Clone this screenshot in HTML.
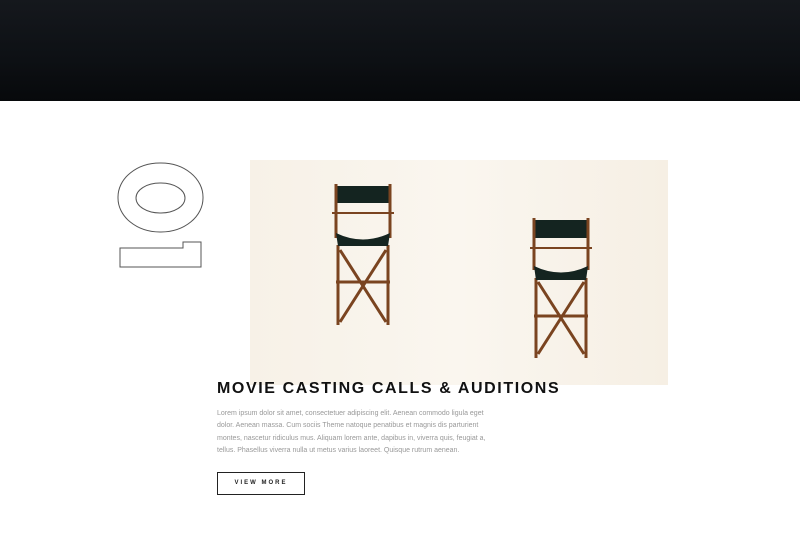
<!DOCTYPE html>
<html><head><style>
body{margin:0;width:800px;height:550px;background:#fff;position:relative;overflow:hidden;font-family:"Liberation Sans",sans-serif}
.top{position:absolute;left:0;top:0;width:800px;height:101px;background:linear-gradient(180deg,#15181d 0%,#0d1014 60%,#07090b 100%)}
.num{position:absolute;left:0;top:0}
.img{position:absolute;left:250px;top:160px;width:418px;height:225px;background:linear-gradient(90deg,#f7f1e7,#faf6ef 50%,#f6efe4)}
h1{position:absolute;left:217px;top:380px;margin:0;font-size:16px;letter-spacing:1.6px;font-weight:bold;color:#111;white-space:nowrap}
p{position:absolute;left:217px;top:408px;margin:0;width:270px;font-size:7px;line-height:12.3px;color:#999}
.btn{position:absolute;left:217px;top:472px;width:86px;height:21px;border:1.5px solid #222;font-size:6px;letter-spacing:2px;font-weight:bold;text-align:center;line-height:21px;color:#222}
</style></head><body>
<div class="top"></div>
<svg class="num" width="800" height="300" viewBox="0 0 800 300">
<g fill="none" stroke="#555" stroke-width="1">
<rect x="118" y="163" width="85" height="69" rx="42" ry="34"/>
<rect x="136" y="183" width="49" height="30" rx="24" ry="15"/>
<path d="M120 267 L201 267 L201 242 L183 242 L183 248 L120 248 Z"/>
</g></svg>
<div class="img">
<svg width="418" height="225" viewBox="0 0 418 225">
<g stroke="#7a4420" stroke-width="3" fill="none">
<rect x="86" y="26" width="54" height="17" fill="#142420" stroke="none"/>
<line x1="86" y1="24" x2="86" y2="78"/><line x1="140" y1="24" x2="140" y2="78"/>
<line x1="82" y1="53" x2="144" y2="53" stroke-width="2"/>
<path d="M88 85 L88 165 M138 85 L138 165 M90 90 L136 162 M136 90 L90 162 M86 122 L140 122"/>
<path d="M86 73 Q113 86 140 73 L138 86 L88 86 Z" fill="#142420" stroke="none"/>
</g>
<g stroke="#7a4420" stroke-width="3" fill="none">
<rect x="284" y="60" width="54" height="18" fill="#142420" stroke="none"/>
<line x1="284" y1="58" x2="284" y2="110"/><line x1="338" y1="58" x2="338" y2="110"/>
<line x1="280" y1="88" x2="342" y2="88" stroke-width="2"/>
<path d="M286 118 L286 198 M336 118 L336 198 M288 122 L334 194 M334 122 L288 194 M284 156 L338 156"/>
<path d="M284 106 Q311 119 338 106 L336 120 L286 120 Z" fill="#142420" stroke="none"/>
</g>
</svg></div>
<h1>MOVIE CASTING CALLS &amp; AUDITIONS</h1>
<p>Lorem ipsum dolor sit amet, consectetuer adipiscing elit. Aenean commodo ligula eget dolor. Aenean massa. Cum sociis Theme natoque penatibus et magnis dis parturient montes, nascetur ridiculus mus. Aliquam lorem ante, dapibus in, viverra quis, feugiat a, tellus. Phasellus viverra nulla ut metus varius laoreet. Quisque rutrum aenean.</p>
<div class="btn">VIEW MORE</div>
</body></html>
